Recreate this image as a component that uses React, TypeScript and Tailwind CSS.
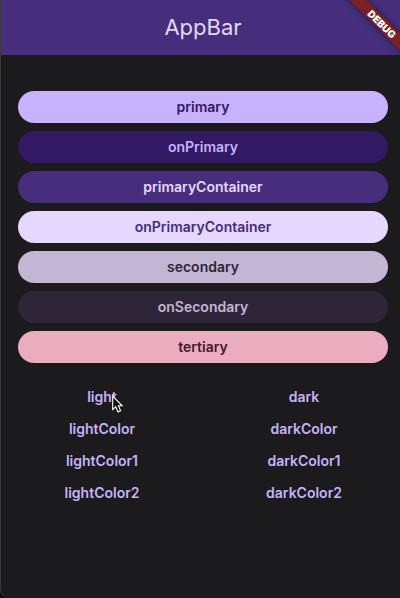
const swatches = [
  { label: "primary", style: "bg-[#c7b2fd] text-[#311963]" },
  { label: "onPrimary", style: "bg-[#311963] text-[#c7b2fd]" },
  { label: "primaryContainer", style: "bg-[#462e7c] text-[#e6d7fd]" },
  { label: "onPrimaryContainer", style: "bg-[#e5d7fd] text-[#462e7c]" },
  { label: "secondary", style: "bg-[#c2b6d4] text-[#2e2638]" },
  { label: "onSecondary", style: "bg-[#2e2638] text-[#c2b6d4]" },
  { label: "tertiary", style: "bg-[#ecacc0] text-[#45192b]" },
];

const themeRows = [
  ["light", "dark"],
  ["lightColor", "darkColor"],
  ["lightColor1", "darkColor1"],
  ["lightColor2", "darkColor2"],
];

function DebugBanner() {
  return (
    <div className="pointer-events-none absolute top-0 right-0 size-16 overflow-hidden">
      <div className="absolute top-[18px] -right-7 flex h-3 w-[92px] rotate-45 items-center justify-center bg-[#7b2027] text-[10px] leading-3 font-black text-white shadow-[0_0_6px_rgba(0,0,0,0.5)]">
        DEBUG
      </div>
    </div>
  );
}

function Cursor() {
  return (
    <svg
      className="pointer-events-none absolute top-3.5 left-full -ml-[5px]"
      width="11"
      height="18"
      viewBox="0 0 11 18"
      aria-hidden="true"
    >
      <path
        d="M0.7 1.2V14.6L3.7 11.8L6 16.9L8.6 15.7L6.4 10.8H10.2Z"
        fill="#17120f"
        stroke="#ffffff"
        strokeWidth="1.1"
      />
    </svg>
  );
}

export default function App() {
  return (
    <div className="bg-[#0c0c0d]">
      <div className="relative min-h-screen overflow-hidden rounded-bl-lg border-l border-[#3b3b3d] bg-[#1b1a1c] font-['Inter',sans-serif]">
        <div className="w-[calc(100%+5px)]">
          <header className="flex h-[55px] items-center justify-center bg-[#462e7c] pb-0.5">
            <h1 className="text-[22px] leading-7 text-[#e6d7f5]">AppBar</h1>
          </header>
          <main className="pt-9">
            <div className="flex flex-col gap-2 px-[17px]">
              {swatches.map(({ label, style }) => (
                <button
                  key={label}
                  type="button"
                  className={`h-8 rounded-full text-sm font-semibold ${style}`}
                >
                  {label}
                </button>
              ))}
            </div>
            <div className="mt-[18px] grid grid-cols-2 justify-items-center">
              {themeRows.flat().map((label) => (
                <button
                  key={label}
                  type="button"
                  className="relative h-8 text-sm font-semibold text-[#c7b2fd]"
                >
                  {label}
                  {label === "light" && <Cursor />}
                </button>
              ))}
            </div>
          </main>
        </div>
        <DebugBanner />
      </div>
    </div>
  );
}
